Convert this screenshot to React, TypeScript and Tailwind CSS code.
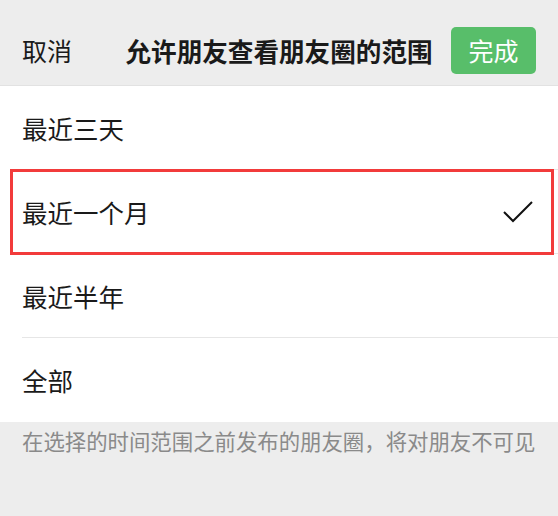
import React from "react";

const items = ["最近三天", "最近一个月", "最近半年", "全部"];

export default function App() {
  return (
    <div
      className="w-[558px] h-[516px] bg-[#ededed] flex flex-col"
      style={{ fontFamily: '"Noto Sans CJK SC", "Noto Sans", sans-serif' }}
    >
      <div className="h-[86px] shrink-0 border-b border-[#e2e2e2] flex items-center pt-[16px] px-[22px]">
        <div className="flex-1 text-[25px] text-[#1a1a1a] leading-none">取消</div>
        <div className="text-[25.6px] font-semibold text-[#1a1a1a] leading-none">允许朋友查看朋友圈的范围</div>
        <div className="flex-1 flex justify-end">
          <div className="w-[85px] h-[47px] rounded-[5px] bg-[#58be6a] text-white text-[25px] flex items-center justify-center leading-none">
            完成
          </div>
        </div>
      </div>
      <div className="bg-white">
        {items.map((t, i) => (
          <div key={t} className="relative pl-[22px]">
            <div
              className={
                "h-[84px] flex items-center justify-between pr-[25px] " +
                (i < 3 ? "border-b border-[#e6e6e6]" : "h-[83px]")
              }
            >
              <span className="text-[25.5px] text-[#1a1a1a] leading-none">{t}</span>
              {i === 1 && (
                <svg width="30" height="22" viewBox="0 0 30 22" fill="none">
                  <path d="M1 11 L10 20 L29 1" stroke="#111" strokeWidth="2" />
                </svg>
              )}
            </div>
            {i === 1 && (
              <div className="absolute left-[10px] top-[-1px] w-[544px] h-[86px] border-[3px] border-[#f23b3b]" />
            )}
          </div>
        ))}
      </div>
      <div className="px-[22px] pt-[6px] text-[21.4px] text-[#8a8a8a] leading-[1.2]">
        在选择的时间范围之前发布的朋友圈，将对朋友不可见
      </div>
    </div>
  );
}
